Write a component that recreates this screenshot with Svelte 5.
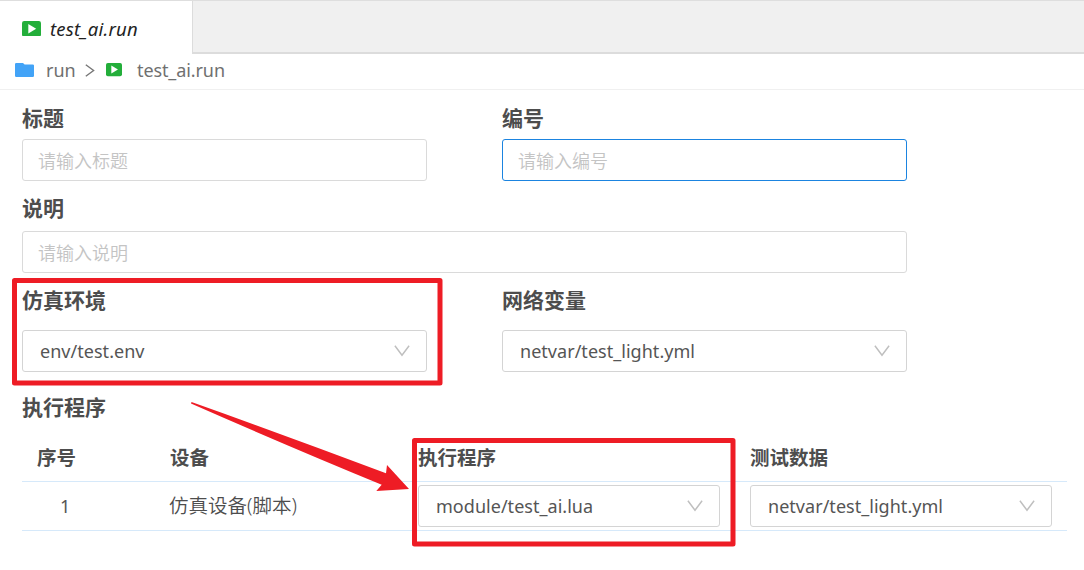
<script>
  const environment = 'env/test.env';
  const variables = 'netvar/test_light.yml';
  const rows = [{ id: 1, device: '仿真设备(脚本)', program: 'module/test_ai.lua', data: 'netvar/test_light.yml' }];
</script>

{#snippet runIcon(size)}
  <svg class="run-icon" width={size} height={size * 15.6 / 19} viewBox="0 0 19 15.6" aria-hidden="true">
    <rect width="19" height="15.6" rx="2.2" fill="#23ae3a" />
    <path d="M6.3 3v9.6L14.2 7.8z" fill="#fff" />
  </svg>
{/snippet}

{#snippet select(value)}
  <div class="control select">
    <span class="latin">{value}</span>
    <svg width="16" height="12" viewBox="0 0 16 12" aria-hidden="true">
      <path d="M.9.8 8 10.3 15.1.8" fill="none" stroke="#bfbfbf" stroke-width="1.45" />
    </svg>
  </div>
{/snippet}

<div class="app">
  <header class="tabs">
    <div class="tab">{@render runIcon(19)}<span class="tab-name">test_ai.run</span></div>
    <div class="tab-space"></div>
  </header>

  <nav class="crumbs">
    <svg class="folder" width="19" height="14" viewBox="0 0 19 14" aria-hidden="true">
      <path d="M1.2 0H8l1.6 1.4h8.2q1.2 0 1.2 1.2v10.2q0 1.2-1.2 1.2H1.2Q0 14 0 12.8V1.2Q0 0 1.2 0z" fill="#42a3f7" />
    </svg>
    <span class="crumb">run</span>
    <svg class="sep" width="10" height="13" viewBox="0 0 10 13" aria-hidden="true">
      <path d="M.8.7 8.6 6.5.8 12.3" fill="none" stroke="#777" stroke-width="1.4" />
    </svg>
    {@render runIcon(16)}
    <span class="crumb file">test_ai.run</span>
  </nav>

  <main>
    <div class="pair">
      <div class="field">
        <div class="label">标题</div>
        <div class="control hint">请输入标题</div>
      </div>
      <div class="field">
        <div class="label">编号</div>
        <div class="control hint focused">请输入编号</div>
      </div>
    </div>
    <div class="field wide">
      <div class="label">说明</div>
      <div class="control hint">请输入说明</div>
    </div>
    <div class="pair choices">
      <div class="field">
        <div class="label">仿真环境</div>
        {@render select(environment)}
      </div>
      <div class="field">
        <div class="label">网络变量</div>
        {@render select(variables)}
      </div>
    </div>

    <div class="label section">执行程序</div>
    <div class="table">
      <div class="row head">
        <span class="index">序号</span><span>设备</span><span>执行程序</span><span>测试数据</span>
      </div>
      {#each rows as row}
        <div class="row">
          <span class="index number">{row.id}</span>
          <span class="device">{row.device}</span>
          {@render select(row.program)}
          {@render select(row.data)}
        </div>
      {/each}
    </div>
  </main>

  <svg class="marks" width="1084" height="570" viewBox="0 0 1084 570" aria-hidden="true">
    <g fill="none" stroke="#ee1c25" stroke-width="5" stroke-linejoin="round">
      <rect x="14.5" y="280.5" width="425.5" height="102.5" />
      <rect x="414.5" y="440.5" width="318.5" height="103.5" />
    </g>
    <path d="M191.5 402Q290 437 386 473.3L387 465 409 489 376.3 491 381.7 484.7Q290 447 191 403.5z" fill="#ee1c25" />
  </svg>
</div>

<style>
  :global(body) {
    margin: 0;
    background: #fff;
  }
  .app {
    position: relative;
    box-sizing: border-box;
    width: 1084px;
    height: 570px;
    overflow: hidden;
    background: #fff;
    color: #4d4d4d;
    font-family: 'Noto Sans', 'Noto Sans CJK SC', sans-serif;
  }
  .app div,
  .app header,
  .app nav,
  .app span {
    box-sizing: border-box;
  }
  svg {
    display: block;
    flex: none;
  }
  .tabs {
    display: flex;
    height: 54px;
    border-top: 1px solid #dedede;
  }
  .tab {
    display: flex;
    align-items: center;
    width: 192px;
    padding: 2px 0 0 22px;
  }
  .tab-name {
    margin-left: 9px;
    color: #222;
    font-size: 18.5px;
    font-style: italic;
    letter-spacing: 0.2px;
  }
  .tab-space {
    flex: 1;
    border-left: 1px solid #dcdcdc;
    border-bottom: 2px solid #dcdcdc;
    background: #f0f0f0;
  }
  .crumbs {
    display: flex;
    align-items: center;
    height: 36px;
    padding: 0 0 3px 15px;
    border-bottom: 1px solid #f0f0f0;
  }
  .crumb {
    width: 28px;
    margin-left: 12px;
    color: #707070;
    font-size: 18px;
    white-space: nowrap;
  }
  .crumb.file {
    width: auto;
    margin-left: 15px;
    letter-spacing: -0.1px;
  }
  .sep {
    margin: 1px 11px 0 11px;
  }
  main {
    padding: 7px 17px 0 22px;
  }
  .pair {
    display: flex;
    gap: 75px;
  }
  .field {
    width: 405px;
  }
  .field.wide {
    width: 885px;
    margin-top: 7px;
  }
  .label {
    display: flex;
    align-items: center;
    height: 42px;
    padding-bottom: 3px;
    font-family: 'Noto Sans CJK SC', sans-serif;
    font-size: 21px;
    font-weight: 700;
  }
  .wide .label {
    height: 43px;
    padding-bottom: 5px;
  }
  .choices .label {
    height: 57px;
    padding-bottom: 5px;
  }
  .section {
    height: 54px;
    margin-top: 8px;
  }
  .control {
    display: flex;
    align-items: center;
    height: 42px;
    border: 1px solid #dadada;
    border-radius: 3px;
    background: #fff;
  }
  .hint {
    padding-left: 15px;
    color: #c4c4c4;
    font-family: 'Noto Sans CJK SC', sans-serif;
    font-size: 18px;
    font-weight: 350;
  }
  .focused {
    border-color: #1b84e0;
  }
  .select {
    justify-content: space-between;
    padding: 0 16px 0 17px;
    border-color: #d4d4d4;
  }
  .latin {
    color: #555;
    font-size: 18px;
    letter-spacing: 0.03px;
    white-space: nowrap;
  }
  .row {
    display: grid;
    grid-template-columns: 148px 248px 302px 302px;
    align-items: center;
    height: 49px;
    border-bottom: 1px solid #d6e9fa;
    font-size: 19.5px;
  }
  .row > .control:last-child,
  .head > span:last-child {
    margin-left: 30px;
    width: 302px;
  }
  .head {
    height: 48px;
    padding-bottom: 3px;
    font-family: 'Noto Sans CJK SC', sans-serif;
    font-weight: 700;
  }
  .index {
    padding-left: 15px;
  }
  .number {
    padding-left: 38px;
    color: #555;
    font-size: 18px;
  }
  .device {
    margin-left: -1px;
    padding-bottom: 3px;
    font-weight: 350;
  }
  .marks {
    position: absolute;
    inset: 0;
    pointer-events: none;
  }
</style>
